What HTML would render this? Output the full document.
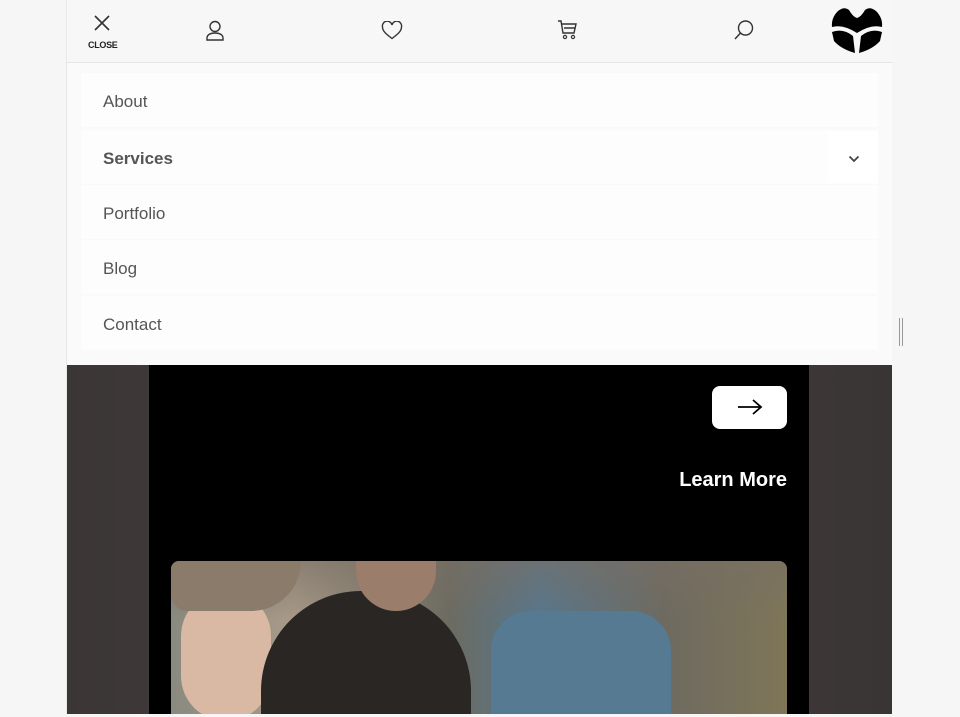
<!DOCTYPE html>
<html><head><style>
body{margin:0;width:960px;height:717px;background:#f6f6f6;font-family:"Liberation Sans",sans-serif;position:relative;overflow:hidden}
.panel{position:absolute;left:66px;top:0;width:825px;height:714px;background:#f9f9f9;border-left:1px solid #e8e8e8}
.hdr{position:absolute;left:0;top:0;width:825px;height:62px;background:#f7f7f7;border-bottom:1px solid #e6e6e6}
.menu{position:absolute;left:0;top:63px;width:825px;height:302px;background:#fafafa}
.item{position:absolute;left:14px;width:797px;height:54px;background:#fdfdfd;color:#555;font-size:17px;line-height:58px;padding-left:22px;box-sizing:border-box}
.dark{position:absolute;left:0;top:365px;width:825px;height:349px;background:linear-gradient(90deg,#3b3636,#463f3c 40%,#3a3535)}
.black{position:absolute;left:82px;top:0;width:660px;height:349px;background:#000}
.btn{position:absolute;left:563px;top:21px;width:75px;height:43px;background:#fff;border-radius:8px}
.lm{position:absolute;right:22px;top:104px;color:#fff;font-weight:bold;font-size:20px}
.photo{position:absolute;left:22px;top:196px;width:616px;height:153px;border-radius:8px 8px 0 0;overflow:hidden;background:linear-gradient(90deg,#8a8a80 0%,#a89a88 20%,#6c6b60 45%,#56778e 60%,#6d6a60 80%,#7f7658 100%)}
</style></head><body>
<div class="panel">
 <div class="hdr">
  <svg style="position:absolute;left:26px;top:14px" width="18" height="18" viewBox="0 0 18 18"><path d="M2 2L16 16M16 2L2 16" stroke="#333" stroke-width="1.6"/></svg>
  <div style="position:absolute;left:21px;top:40px;font-size:9px;color:#222;font-weight:bold;letter-spacing:-.3px">CLOSE</div>
  <svg style="position:absolute;left:138px;top:20px" width="20" height="22" viewBox="0 0 20 22"><circle cx="10" cy="6.5" r="5" fill="none" stroke="#333" stroke-width="1.4"/><path d="M2 20v-2c0-3 3-5 8-5s8 2 8 5v2z" fill="none" stroke="#333" stroke-width="1.4"/></svg>
  <svg style="position:absolute;left:314px;top:21px" width="22" height="19" viewBox="0 0 22 19"><path d="M11 17.5C5 13 1.5 10 1.5 6A4.7 4.7 0 0 1 11 4a4.7 4.7 0 0 1 9.5 2c0 4-3.5 7-9.5 11.5z" fill="none" stroke="#333" stroke-width="1.4"/></svg>
  <svg style="position:absolute;left:490px;top:19px" width="22" height="22" viewBox="0 0 22 22"><path d="M1 2h3l2 12h11l2-9H5M7 9h11" fill="none" stroke="#333" stroke-width="1.4"/><circle cx="8" cy="18" r="1.6" fill="none" stroke="#333" stroke-width="1.2"/><circle cx="16" cy="18" r="1.6" fill="none" stroke="#333" stroke-width="1.2"/></svg>
  <svg style="position:absolute;left:666px;top:19px" width="22" height="22" viewBox="0 0 22 22"><circle cx="12.5" cy="9" r="7" fill="none" stroke="#333" stroke-width="1.4"/><path d="M7.5 14L2 20" stroke="#333" stroke-width="1.5"/></svg>
  <svg style="position:absolute;left:764px;top:5px" width="52" height="50" viewBox="0 0 52 50">
   <path d="M7 6Q13 1 18 5Q22 12 26 13Q30 12 34 5Q39 1 45 6Q52 13 51 22Q40 19 26 28Q12 19 1 22Q0 13 7 6Z" fill="#000"/>
   <path d="M1 27Q12 23 22 31L24 48Q10 44 3 36Z" fill="#000"/>
   <path d="M51 27Q40 23 30 31L28 48Q42 44 49 36Z" fill="#000"/>
  </svg>
 </div>
 <div class="menu">
  <div class="item" style="top:10px">About</div>
  <div class="item" style="top:67px;font-weight:bold">Services</div>
  <div style="position:absolute;left:761px;top:68px;width:50px;height:52px;background:#fff"></div>
  <svg style="position:absolute;left:781px;top:92px" width="12" height="8" viewBox="0 0 12 8"><path d="M1.5 1.5L6 6l4.5-4.5" fill="none" stroke="#444" stroke-width="1.8"/></svg>
  <div class="item" style="top:122px">Portfolio</div>
  <div class="item" style="top:177px">Blog</div>
  <div class="item" style="top:233px">Contact</div>
 </div>
 <div class="dark">
  <div class="black">
   <div class="btn"><svg style="position:absolute;left:25px;top:12px" width="26" height="18" viewBox="0 0 26 18"><path d="M1 9h23M16 2l8 7-8 7" fill="none" stroke="#000" stroke-width="1.8"/></svg></div>
   <div class="lm">Learn More</div>
   <div class="photo">
    <div style="position:absolute;left:0;top:0;width:616px;height:60px;background:linear-gradient(180deg,rgba(120,110,100,.6),transparent)"></div>
    <div style="position:absolute;left:10px;top:30px;width:90px;height:130px;border-radius:45px;background:#d9b9a4"></div>
    <div style="position:absolute;left:0;top:0;width:130px;height:50px;border-radius:0 0 60px 20px;background:#8a7b6a"></div>
    <div style="position:absolute;left:90px;top:30px;width:210px;height:160px;border-radius:100px 100px 0 0;background:#2a2624"></div>
    <div style="position:absolute;left:185px;top:0;width:80px;height:50px;border-radius:0 0 40px 40px;background:#9a7d6a"></div>
    <div style="position:absolute;left:320px;top:50px;width:180px;height:110px;border-radius:40px 40px 0 0;background:#577a93"></div>
   </div>
  </div>
 </div>
</div>
<div style="position:absolute;left:899px;top:318px;width:1px;height:28px;background:#999"></div>
<div style="position:absolute;left:902px;top:318px;width:1px;height:28px;background:#999"></div>
</body></html>
